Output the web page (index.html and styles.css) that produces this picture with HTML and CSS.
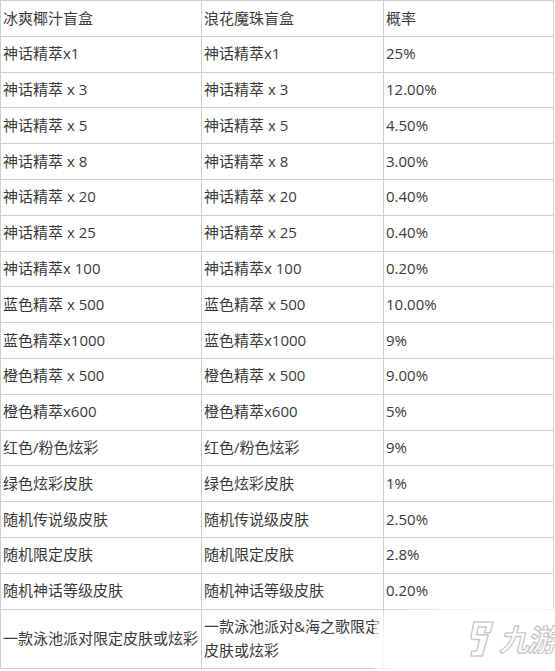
FILE: index.html
```html
<!DOCTYPE html>
<html>
<head>
<meta charset="utf-8">
<link rel="stylesheet" href="styles.css">
</head>
<body>
<div class="wrap">
<div class="rates">
<div class="cell">冰爽椰汁盲盒</div><div class="cell">浪花魔珠盲盒</div><div class="cell">概率</div>
<div class="cell">神话精萃x1</div><div class="cell">神话精萃x1</div><div class="cell">25%</div>
<div class="cell">神话精萃 x 3</div><div class="cell">神话精萃 x 3</div><div class="cell">12.00%</div>
<div class="cell">神话精萃 x 5</div><div class="cell">神话精萃 x 5</div><div class="cell">4.50%</div>
<div class="cell">神话精萃 x 8</div><div class="cell">神话精萃 x 8</div><div class="cell">3.00%</div>
<div class="cell">神话精萃 x 20</div><div class="cell">神话精萃 x 20</div><div class="cell">0.40%</div>
<div class="cell">神话精萃 x 25</div><div class="cell">神话精萃 x 25</div><div class="cell">0.40%</div>
<div class="cell">神话精萃x 100</div><div class="cell">神话精萃x 100</div><div class="cell">0.20%</div>
<div class="cell">蓝色精萃 x 500</div><div class="cell">蓝色精萃 x 500</div><div class="cell">10.00%</div>
<div class="cell">蓝色精萃x1000</div><div class="cell">蓝色精萃x1000</div><div class="cell">9%</div>
<div class="cell">橙色精萃 x 500</div><div class="cell">橙色精萃 x 500</div><div class="cell">9.00%</div>
<div class="cell">橙色精萃x600</div><div class="cell">橙色精萃x600</div><div class="cell">5%</div>
<div class="cell">红色/粉色炫彩</div><div class="cell">红色/粉色炫彩</div><div class="cell">9%</div>
<div class="cell">绿色炫彩皮肤</div><div class="cell">绿色炫彩皮肤</div><div class="cell">1%</div>
<div class="cell">随机传说级皮肤</div><div class="cell">随机传说级皮肤</div><div class="cell">2.50%</div>
<div class="cell">随机限定皮肤</div><div class="cell">随机限定皮肤</div><div class="cell">2.8%</div>
<div class="cell">随机神话等级皮肤</div><div class="cell">随机神话等级皮肤</div><div class="cell">0.20%</div>
<div class="cell">一款泳池派对限定皮肤或炫彩</div><div class="cell"><span>一款泳池派对&amp;海之歌限定皮肤或炫彩</span></div><div class="cell"></div>
</div>
<div class="watermark">
  <svg class="nine" viewBox="0 0 32 42" width="31" height="41">
    <path d="M9 3 L29 3 L26 14 L20 14 L22 8 L14 8 L12 16 L24 16 L18 38 L6 38 L7 33 L12 33 L15 21 L7 21 L6 19 Z" fill="#fff" stroke="#c9c9c9" stroke-width="1.5" stroke-linejoin="round"/>
  </svg>
  <span class="brand">九游</span>
</div>
</div>
</body>
</html>
```

FILE: styles.css
```css
html, body {
  margin: 0;
  padding: 0;
  background: #fff;
}
.wrap {
  position: relative;
  width: 555px;
  height: 671px;
  overflow: hidden;
}
.rates {
  display: grid;
  grid-template-columns: 201px 182px 170px;
  grid-template-rows: repeat(17, 35.8px) 59.6px;
  width: 554px;
  border-left: 1px solid #cfcfcf;
  border-top: 1px solid #cfcfcf;
  box-sizing: border-box;
  font-family: "Open Sans", "Noto Sans CJK SC", sans-serif;
  font-size: 15px;
  color: #3a3a3a;
}
.cell {
  display: flex;
  align-items: center;
  border-right: 1px solid #cfcfcf;
  border-bottom: 1px solid #cfcfcf;
  padding: 0 1px 0 2px;
  line-height: 23.8px;
  white-space: nowrap;
  min-width: 0;
}
.cell span {
  white-space: normal;
}
.watermark {
  position: absolute;
  left: 374px;
  top: 609px;
  width: 190px;
  height: 70px;
  background: radial-gradient(ellipse at 70% 55%, rgba(255,255,255,0.97) 45%, rgba(255,255,255,0.85) 70%, rgba(255,255,255,0) 100%);
  display: flex;
  align-items: center;
  padding-left: 91px;
  box-sizing: border-box;
  gap: 6px;
}
.nine {
  flex: none;
  margin-top: -10px;
}
.brand {
  font-family: "Noto Sans CJK SC", sans-serif;
  font-size: 30px;
  font-weight: 700;
  color: #fff;
  -webkit-text-stroke: 1.3px #c9c9c9;
  transform: skewX(-14deg);
  letter-spacing: -2px;
  margin-top: -12px;
  white-space: nowrap;
}
```
